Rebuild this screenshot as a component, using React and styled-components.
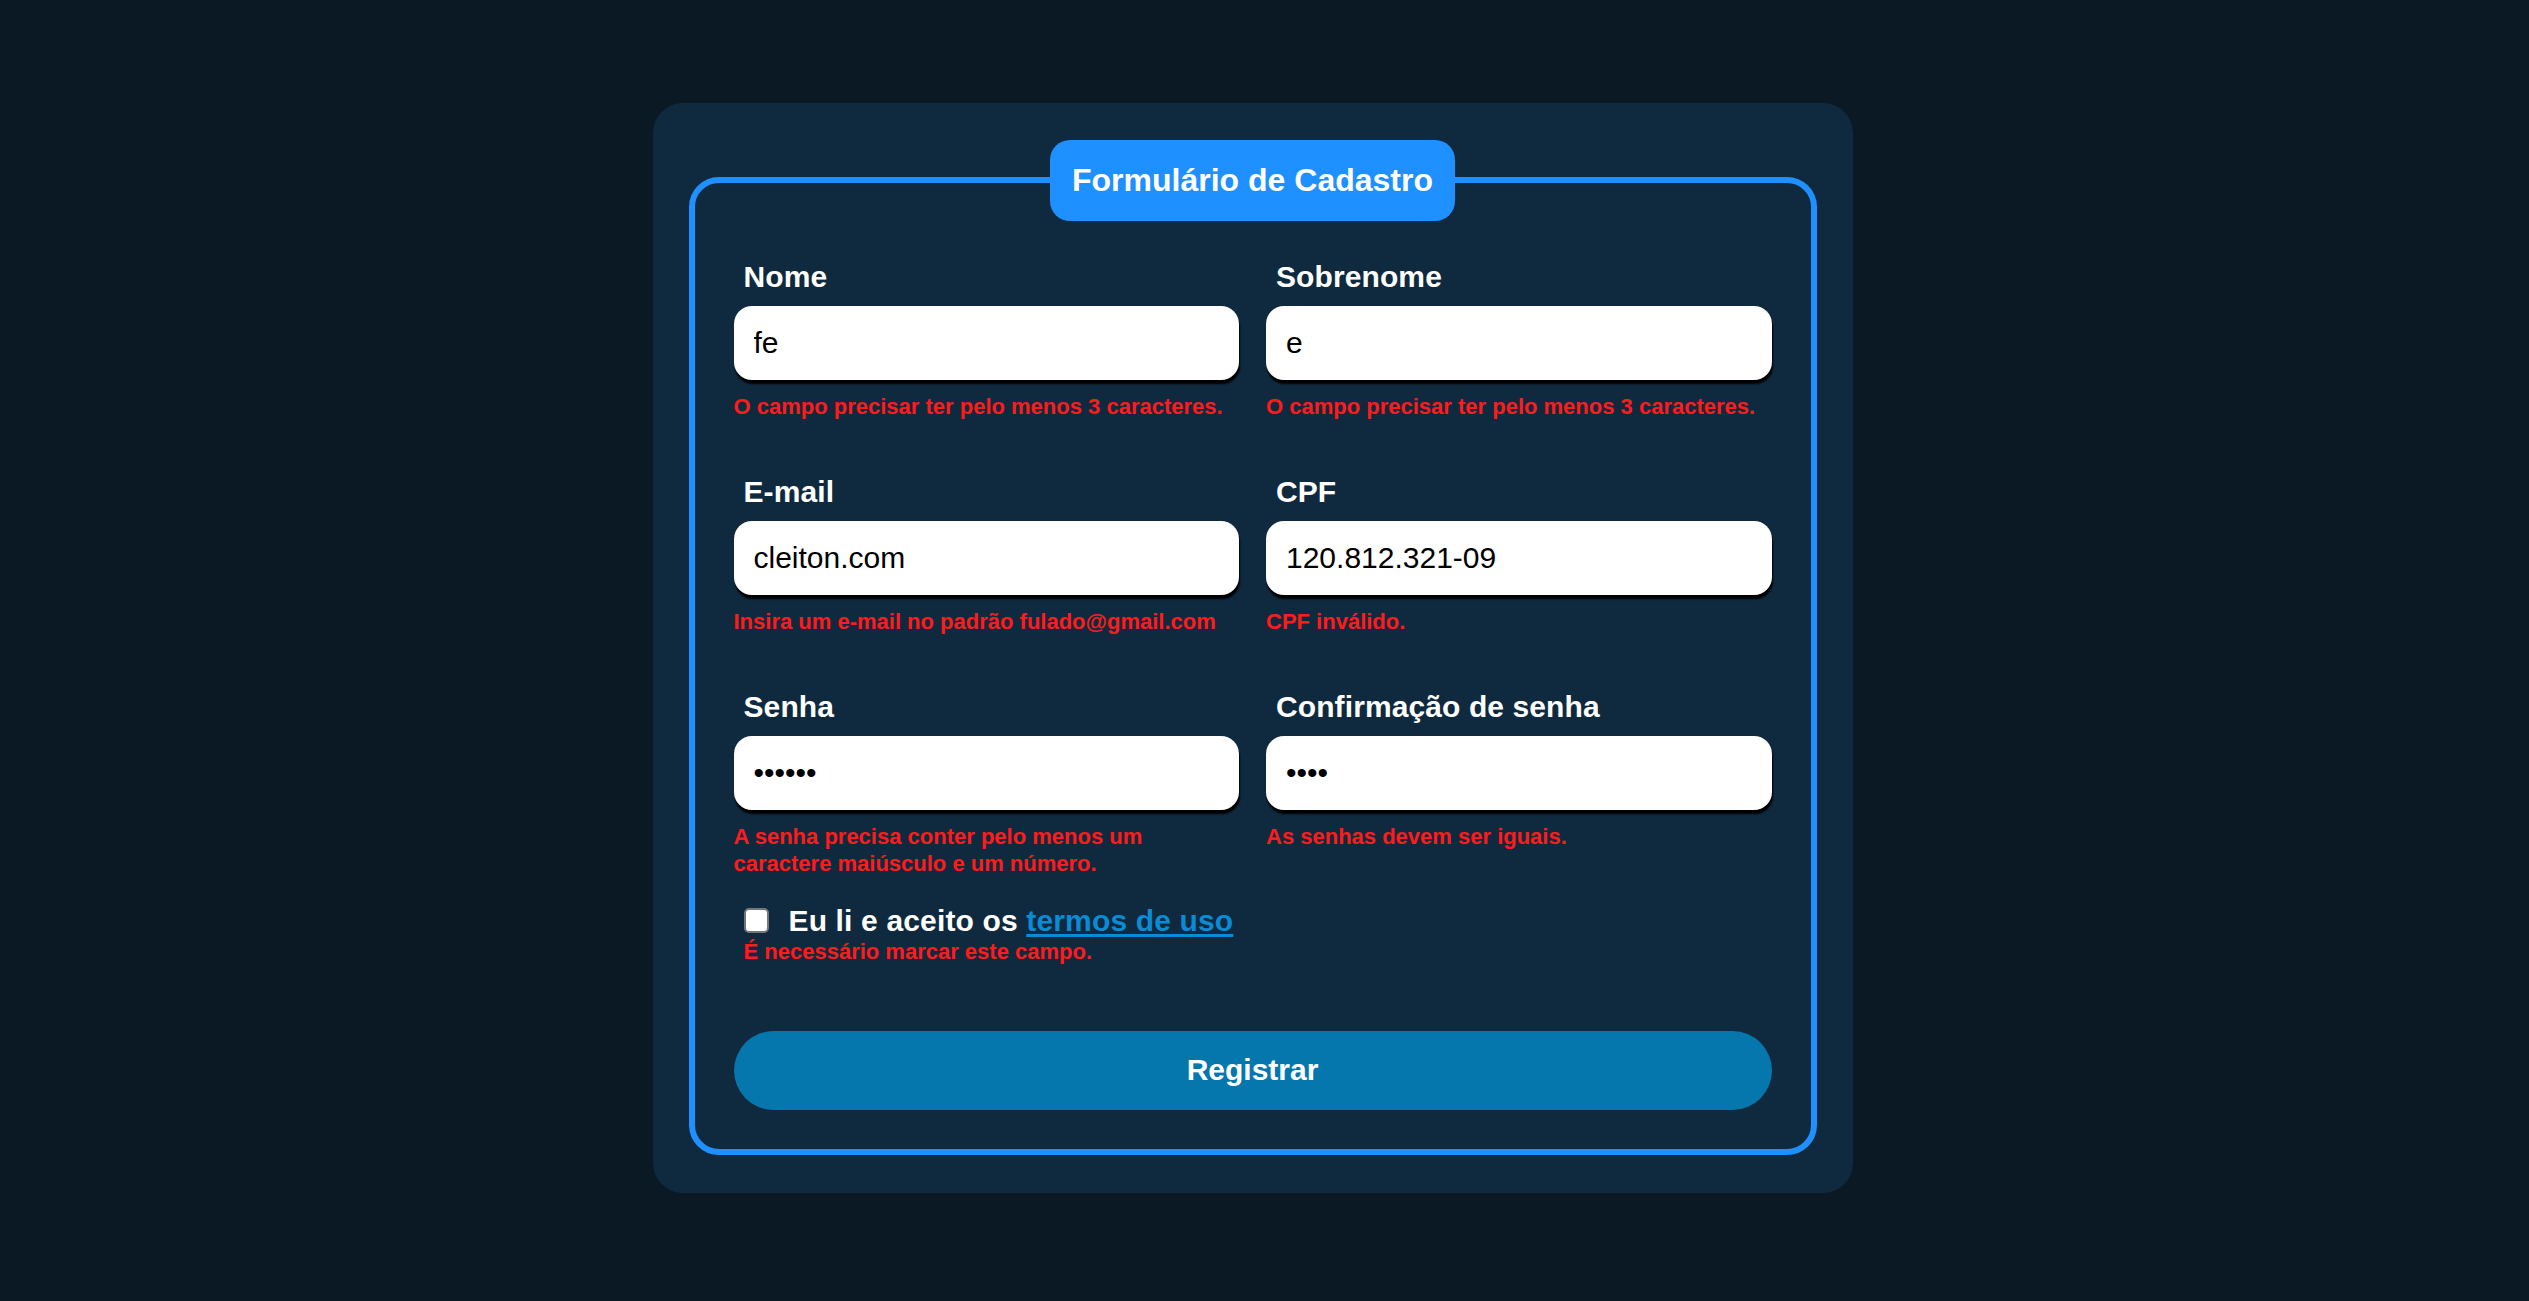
import React from "react";
import styled, { createGlobalStyle } from "styled-components";

const GlobalStyle = createGlobalStyle`
  * {
    box-sizing: border-box;
  }
  body {
    margin: 0;
    background: #0a1923;
    font-family: "Liberation Sans", Arial, sans-serif;
  }
`;

const Page = styled.div`
  min-height: 100vh;
  display: flex;
  justify-content: center;
  align-items: center;
  padding: 0 24px 6px 0;
`;

const Card = styled.div`
  width: 1200px;
  padding: 37px 36px 38px;
  background: #0f2a3f;
  border-radius: 30px;
`;

const Fieldset = styled.fieldset`
  margin: 0;
  padding: 39px;
  border: 6px solid #1e90ff;
  border-radius: 30px;
  min-width: 0;
`;

const Legend = styled.legend`
  margin: 0 auto;
  padding: 22px 22px;
  background: #1e90ff;
  color: #ffffff;
  border-radius: 20px;
  font-size: 32px;
  font-weight: 700;
  line-height: 37px;
`;

const Grid = styled.div`
  display: grid;
  grid-template-columns: 1fr 1fr;
  column-gap: 27px;
  row-gap: 55px;
`;

const Field = styled.div`
  display: flex;
  flex-direction: column;
`;

const Label = styled.label`
  margin: 0 0 12px 10px;
  color: #ffffff;
  font-size: 30px;
  font-weight: 700;
  line-height: 34px;
  letter-spacing: 0.1px;
`;

const Input = styled.input`
  width: 100%;
  height: 74px;
  padding: 0 20px;
  border: none;
  outline: none;
  border-radius: 18px;
  background: #ffffff;
  color: #000000;
  font-family: "Liberation Sans", Arial, sans-serif;
  font-size: 30px;
  box-shadow: 1px 4px 2px #000000;
`;

const Error = styled.span`
  display: block;
  margin-top: ${(p) => (p.$tight ? "0" : "13px")};
  color: #ff1b1b;
  font-size: 22px;
  font-weight: 700;
  line-height: 27px;
`;

const Terms = styled.div`
  margin: 27px 0 0 10px;
  display: flex;
  flex-direction: column;
`;

const CheckRow = styled.label`
  display: flex;
  align-items: center;
  gap: 20px;
  color: #ffffff;
  font-size: 30px;
  font-weight: 700;
  line-height: 34px;
  letter-spacing: 0.15px;
`;

const Check = styled.input`
  appearance: none;
  flex: none;
  width: 25px;
  height: 25px;
  margin: 0;
  background: #ffffff;
  border: 2px solid #767676;
  border-radius: 5px;
`;

const TermsLink = styled.a`
  color: #0a8bd3;
  text-decoration: underline;
  text-underline-offset: 3px;
`;

const Button = styled.button`
  width: 100%;
  height: 79px;
  margin-top: 66px;
  border: none;
  border-radius: 40px;
  background: #0677ad;
  color: #ffffff;
  font-family: "Liberation Sans", Arial, sans-serif;
  font-size: 30px;
  font-weight: 700;
  cursor: pointer;
`;

const fields = [
  { id: "nome", label: "Nome", value: "fe", error: "O campo precisar ter pelo menos 3 caracteres." },
  { id: "sobrenome", label: "Sobrenome", value: "e", error: "O campo precisar ter pelo menos 3 caracteres." },
  { id: "email", label: "E-mail", value: "cleiton.com", error: "Insira um e-mail no padrão fulado@gmail.com" },
  { id: "cpf", label: "CPF", value: "120.812.321-09", error: "CPF inválido." },
  {
    id: "senha",
    label: "Senha",
    value: "abcdef",
    type: "password",
    error: "A senha precisa conter pelo menos um caractere maiúsculo e um número.",
  },
  {
    id: "confirmacao",
    label: "Confirmação de senha",
    value: "abcd",
    type: "password",
    error: "As senhas devem ser iguais.",
  },
];

export default function App() {
  return (
    <>
      <GlobalStyle />
      <Page>
        <Card>
          <form onSubmit={(e) => e.preventDefault()}>
            <Fieldset>
              <Legend>Formulário de Cadastro</Legend>
              <Grid>
                {fields.map((f) => (
                  <Field key={f.id}>
                    <Label htmlFor={f.id}>{f.label}</Label>
                    <Input id={f.id} type={f.type || "text"} defaultValue={f.value} />
                    <Error>{f.error}</Error>
                  </Field>
                ))}
              </Grid>
              <Terms>
                <CheckRow>
                  <Check type="checkbox" />
                  <span>
                    Eu li e aceito os <TermsLink href="#">termos de uso</TermsLink>
                  </span>
                </CheckRow>
                <Error $tight>É necessário marcar este campo.</Error>
              </Terms>
              <Button type="submit">Registrar</Button>
            </Fieldset>
          </form>
        </Card>
      </Page>
    </>
  );
}
